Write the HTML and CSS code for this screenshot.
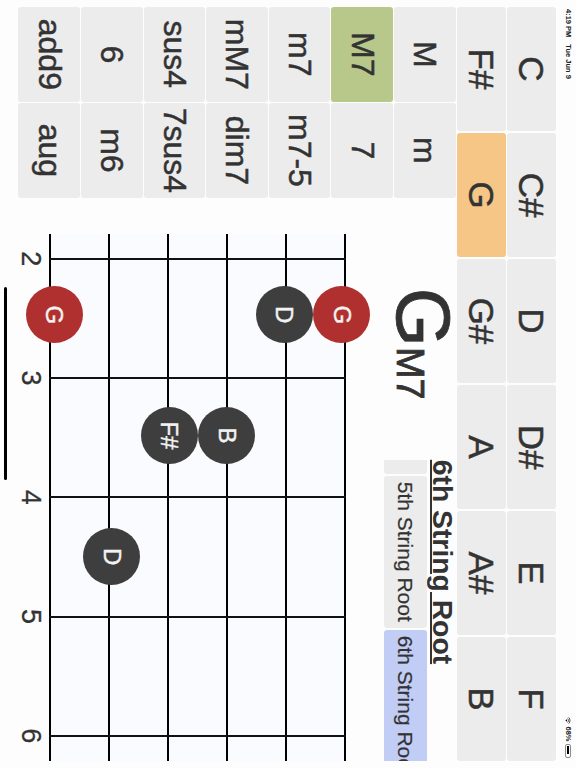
FILE: index.html
```html
<!DOCTYPE html>
<html lang="en">
<head>
<meta charset="utf-8">
<title>Guitar chords</title>
<link rel="stylesheet" href="styles.css">
</head>
<body>
<div class="screen">
  <header class="status">
    <div class="status-left"><span>4:19 PM</span><span>Tue Jun 9</span></div>
    <div class="status-right">
      <svg class="wifi" viewBox="0 0 12 9" aria-hidden="true"><path d="M.7 3.2 C3.6 .4 8.4 .4 11.3 3.2 M2.6 5.2 C4.5 3.4 7.5 3.4 9.4 5.2"/><path class="wifi-dot" d="M6 9 L4 6.9 C5.2 5.9 6.8 5.9 8 6.9 Z"/></svg>
      <span>68%</span>
      <span class="battery"><span class="battery-level"></span></span>
    </div>
  </header>

  <nav class="roots">
    <button class="cell">C</button><button class="cell">C#</button><button class="cell">D</button><button class="cell">D#</button><button class="cell">E</button><button class="cell">F</button>
    <button class="cell">F#</button><button class="cell root-on">G</button><button class="cell">G#</button><button class="cell">A</button><button class="cell">A#</button><button class="cell">B</button>
  </nav>

  <main class="main">
    <nav class="types">
      <button class="cell">M</button><button class="cell">m</button>
      <button class="cell type-on">M7</button><button class="cell">7</button>
      <button class="cell">m7</button><button class="cell">m7-5</button>
      <button class="cell">mM7</button><button class="cell">dim7</button>
      <button class="cell">sus4</button><button class="cell">7sus4</button>
      <button class="cell">6</button><button class="cell">m6</button>
      <button class="cell">add9</button><button class="cell">aug</button>
    </nav>

    <section class="content">
      <div class="head">
        <h1 class="chord"><span class="chord-root">G</span><span class="chord-type">M7</span></h1>
        <div class="picker">
          <h2 class="picker-title">6th String Root</h2>
          <div class="picker-list">
            <div class="picker-track">
              <div class="picker-item"></div>
              <div class="picker-item">5th String Root</div>
              <div class="picker-item picker-on">6th String Root</div>
            </div>
          </div>
        </div>
      </div>

      <div class="board">
        <div class="strings">
          <i class="string"></i><i class="string"></i><i class="string"></i><i class="string"></i><i class="string"></i><i class="string"></i>
        </div>
        <div class="frets">
          <div class="fret"><span class="fret-no">2</span></div>
          <div class="fret"><span class="fret-no">3</span></div>
          <div class="fret"><span class="fret-no">4</span></div>
          <div class="fret"><span class="fret-no">5</span></div>
          <div class="fret"><span class="fret-no">6</span></div>
        </div>
        <div class="dot root f1 s1">G</div>
        <div class="dot f1 s2">D</div>
        <div class="dot f2 s3">B</div>
        <div class="dot f2 s4">F#</div>
        <div class="dot f3 s5">D</div>
        <div class="dot root f1 s6">G</div>
      </div>
    </section>
  </main>

  <div class="home-bar"></div>
</div>
</body>
</html>
```
FILE: styles.css
```css
* { box-sizing: border-box; }

html, body {
  margin: 0;
  width: 576px;
  height: 768px;
  overflow: hidden;
  background: #fdfdfd;
}

.screen {
  position: relative;
  width: 768px;
  height: 576px;
  transform-origin: 0 0;
  transform: translate(576px, 0) rotate(90deg);
  font-family: "Liberation Sans", Arial, sans-serif;
  color: #333;
  background: #fdfdfd;
}

/* status bar */
.status {
  display: flex;
  justify-content: space-between;
  align-items: center;
  height: 20px;
  padding: 0 10px 5px 9px;
  font-size: 7.5px;
  font-weight: 700;
  color: #222;
}
.status-left { display: flex; gap: 7px; }
.status-right { display: flex; align-items: center; gap: 2.5px; }
.wifi { width: 7px; height: 6px; fill: none; stroke: #111; stroke-width: 1.3; }
.wifi-dot { fill: #111; stroke: none; }
.battery {
  display: block;
  width: 14px;
  height: 6px;
  padding: 1px;
  border: 1px solid #888;
  border-radius: 2px;
}
.battery-level { display: block; width: 75%; height: 100%; background: #000; }

/* buttons */
.cell {
  display: flex;
  align-items: center;
  justify-content: center;
  padding: 0;
  border: 0;
  border-radius: 3px;
  background: #ececec;
  color: #333;
  font-family: inherit;
  white-space: nowrap;
  -webkit-text-stroke: 0.5px #333;
}

.roots {
  display: grid;
  grid-template-columns: repeat(6, 124px);
  grid-auto-rows: 49px;
  column-gap: 2px;
  row-gap: 1.3px;
  margin-left: 7px;
}
.roots .cell { font-size: 35px; }
.root-on.cell { background: #f6c687; }

.main {
  display: flex;
  margin-top: 1.2px;
  margin-left: 7px;
}

.types {
  flex: none;
  display: grid;
  grid-template-columns: repeat(2, 94.7px);
  grid-auto-rows: 61.6px;
  column-gap: 1.4px;
  row-gap: 1px;
}
.types .cell { font-size: 32px; }
.type-on.cell { background: #b7c88a; }

.content {
  flex: none;
  width: 563px;
}

/* chord name and picker */
.head {
  display: flex;
  height: 110px;
}
.chord {
  flex: none;
  width: 262px;
  margin: -5px 0 0;
  padding-left: 90px;
  font-weight: 400;
  line-height: 1;
  white-space: nowrap;
  -webkit-text-stroke: 0.8px #333;
}
.chord-root { font-size: 76px; }
.chord-type { font-size: 38px; }

.picker {
  flex: none;
  width: 301px;
}
.picker-title {
  margin: 0;
  height: 28.5px;
  font-size: 28.3px;
  font-weight: 700;
  line-height: 26px;
  text-decoration: underline;
  text-decoration-thickness: 1.5px;
  white-space: nowrap;
}
.picker-list {
  overflow: hidden;
}
.picker-track {
  display: flex;
  gap: 2px;
  width: max-content;
  margin-left: -138px;
}
.picker-item {
  flex: none;
  width: 152px;
  height: 43.5px;
  border-radius: 3px;
  background: #ececec;
  font-size: 21px;
  line-height: 43px;
  text-align: center;
  white-space: nowrap;
  -webkit-text-stroke: 0.2px #333;
}
.picker-on { background: #c2cdf6; }

/* fretboard */
.board {
  position: relative;
  width: 527px;
  height: 297px;
  margin-left: 36px;
  background: #fafbff;
}
.strings {
  display: flex;
  flex-direction: column;
  justify-content: space-between;
  height: 100%;
}
.string {
  display: block;
  height: 2px;
  background: #000;
}
.frets {
  position: absolute;
  inset: 0;
  display: flex;
  gap: 117.25px;
  padding-left: 24px;
}
.fret {
  position: relative;
  flex: none;
  width: 2px;
  height: 100%;
  background: #111;
}
.fret-no {
  position: absolute;
  left: 50%;
  top: 100%;
  transform: translateX(-50%);
  margin-top: 3px;
  font-size: 27px;
  line-height: 30px;
  -webkit-text-stroke: 0.3px #333;
}

.dot {
  position: absolute;
  display: flex;
  align-items: center;
  justify-content: center;
  width: 57px;
  height: 57px;
  border-radius: 50%;
  background: #3e3e3e;
  color: #f2f2f2;
  font-size: 24px;
  -webkit-text-stroke: 0.4px #f2f2f2;
}
.dot.root { background: #b03030; }
.f1 { left: 52.5px; }
.f2 { left: 173.2px; }
.f3 { left: 294.5px; }
.s1 { top: -24.8px; }
.s2 { top: 32.7px; }
.s3 { top: 90.2px; }
.s4 { top: 147.8px; }
.s5 { top: 205.5px; }
.s6 { top: 263px; }

.home-bar {
  position: absolute;
  left: 287px;
  top: 568.5px;
  width: 193px;
  height: 3px;
  border-radius: 2px;
  background: #000;
}
```
